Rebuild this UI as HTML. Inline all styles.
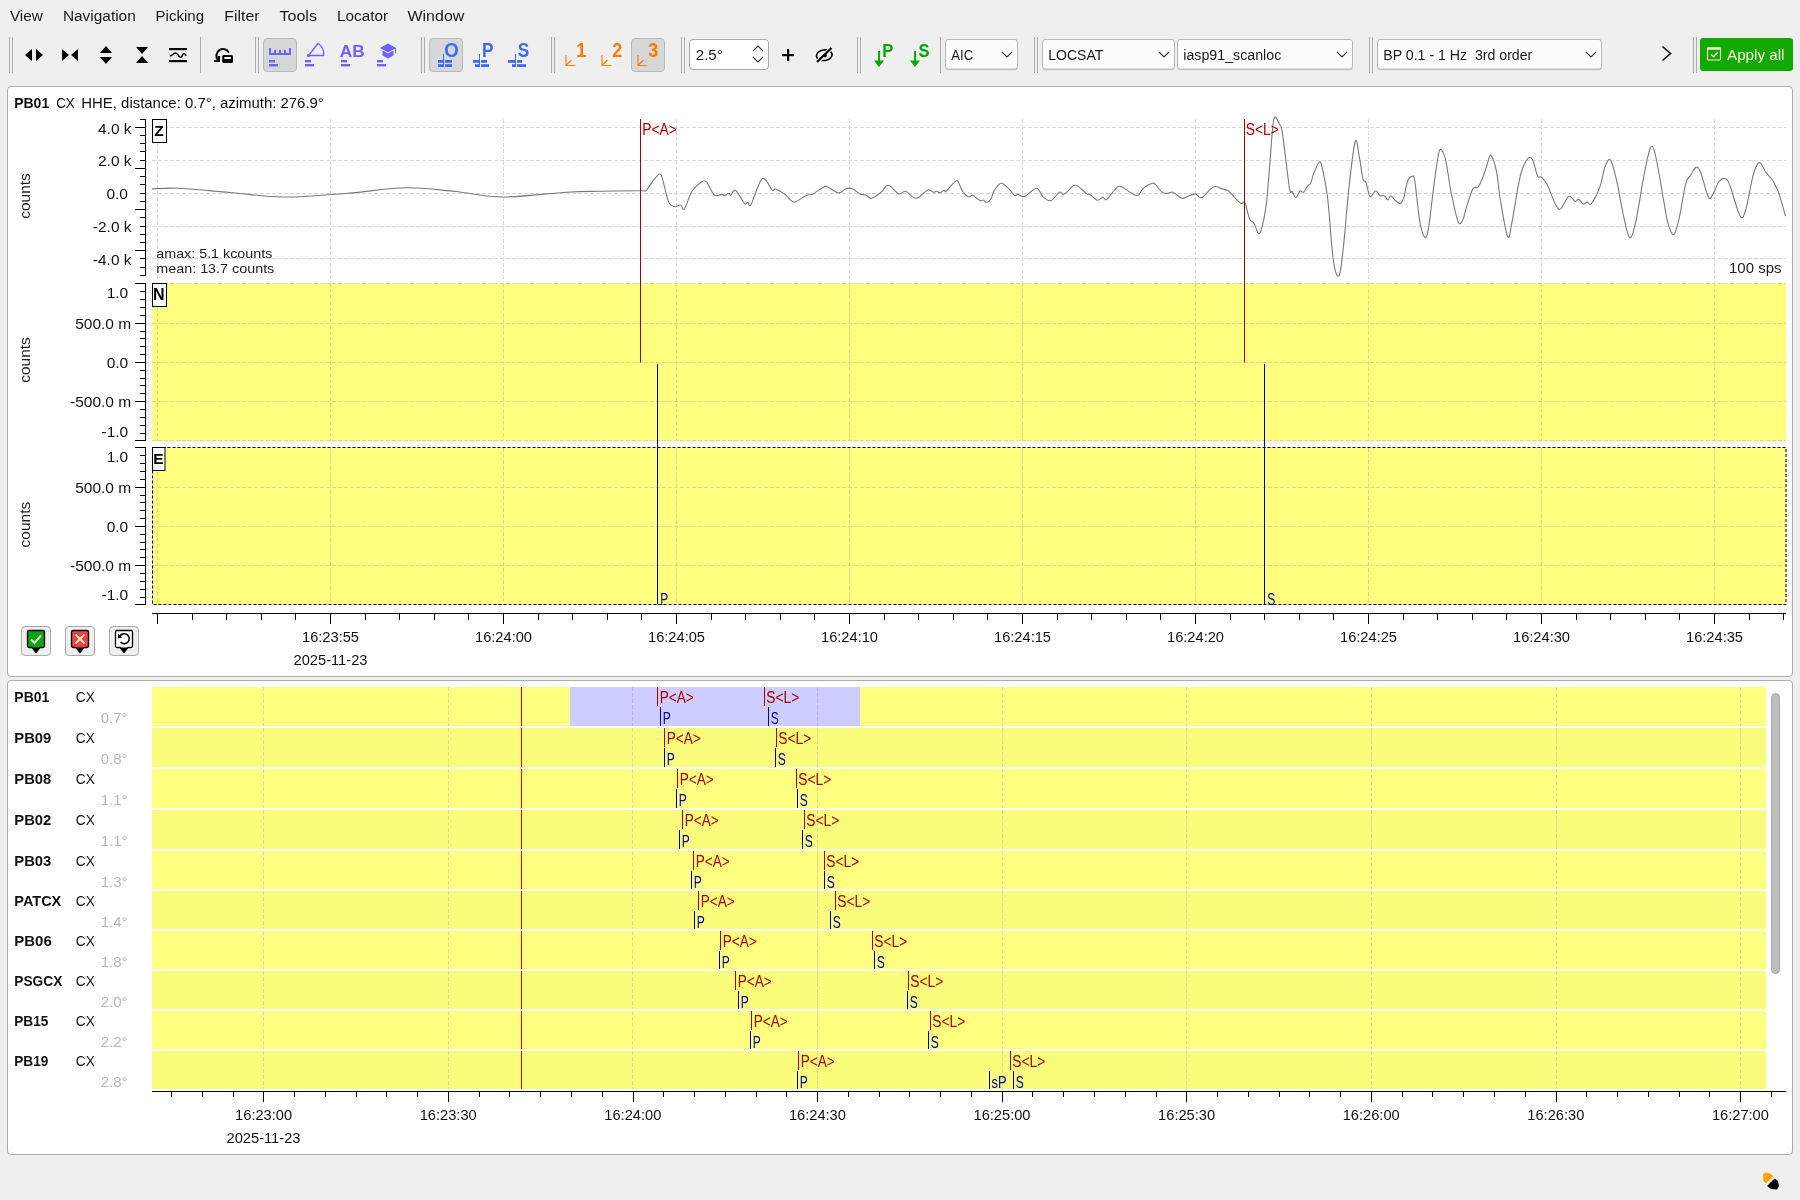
<!DOCTYPE html>
<html><head><meta charset="utf-8"><title>scolv</title>
<style>
html,body{margin:0;padding:0;background:#efefef;overflow:hidden;}
svg{display:block;font-family:"Liberation Sans", sans-serif;will-change:transform;}
</style></head><body>
<svg width="1800" height="1200" viewBox="0 0 1800 1200">
<rect x="0" y="0" width="1800" height="1200" fill="#efefef"/>
<text x="9.899999999999999" y="20.8" font-size="15.5" fill="#1a1a1a" textLength="32.9" lengthAdjust="spacingAndGlyphs">View</text>
<text x="62.900000000000006" y="20.8" font-size="15.5" fill="#1a1a1a" textLength="72.9" lengthAdjust="spacingAndGlyphs">Navigation</text>
<text x="155.5" y="20.8" font-size="15.5" fill="#1a1a1a" textLength="48.6" lengthAdjust="spacingAndGlyphs">Picking</text>
<text x="224.2" y="20.8" font-size="15.5" fill="#1a1a1a" textLength="35.4" lengthAdjust="spacingAndGlyphs">Filter</text>
<text x="279.4" y="20.8" font-size="15.5" fill="#1a1a1a" textLength="37.6" lengthAdjust="spacingAndGlyphs">Tools</text>
<text x="337.0" y="20.8" font-size="15.5" fill="#1a1a1a" textLength="51.1" lengthAdjust="spacingAndGlyphs">Locator</text>
<text x="407.5" y="20.8" font-size="15.5" fill="#1a1a1a" textLength="56.8" lengthAdjust="spacingAndGlyphs">Window</text>
<rect x="9" y="37" width="1" height="36" fill="#a9acb0"/>
<rect x="12" y="37" width="1" height="36" fill="#a9acb0"/>
<path d="M25,55 L32,49 L32,61 Z M36,49 L43,55 L36,61 Z" fill="#000"/>
<path d="M62,49 L69,55 L62,61 Z M78,49 L71,55 L78,61 Z" fill="#000"/>
<path d="M100,53 L106,46 L112,53 Z M100,57 L112,57 L106,64 Z" fill="#000"/>
<path d="M136,47 L148,47 L142,54 Z M142,56 L148,63 L136,63 Z" fill="#000"/>
<rect x="169" y="48" width="18" height="2.2" fill="#000"/>
<rect x="169" y="60" width="18" height="2.2" fill="#000"/>
<path d="M170,55.5 C171.5,57 173,53 175.5,53 C178,53 178.5,57.3 180.5,57.3 C182.5,57.3 182.5,53.5 184,53.5 C185,53.5 185.5,55 186.2,55.8" fill="none" stroke="#000" stroke-width="1.6"/>
<rect x="200" y="37" width="1" height="36" fill="#a9acb0"/>
<path d="M217.8,59.8 A6.6,6.6 0 1 1 228.8,52.6" fill="none" stroke="#000" stroke-width="2"/>
<path d="M215,61 L219,61 L219,57" fill="none" stroke="#000" stroke-width="2.1" stroke-linecap="square"/>
<rect x="222.2" y="55" width="10.8" height="8" fill="#000" rx="1.5"/>
<rect x="224.2" y="57" width="6.8" height="2" fill="#fff" rx="0.8"/>
<rect x="255" y="37" width="1" height="36" fill="#a9acb0"/>
<rect x="258" y="37" width="1" height="36" fill="#a9acb0"/>
<rect x="263.5" y="38.5" width="33" height="33" fill="#d6d7d7" stroke="#b9b9b9" stroke-width="1" rx="3.5"/>
<path d="M270,48 L270,54 L290,54 L290,48 M275,50 L275,54 M280,50 L280,54 M285,50 L285,54" fill="none" stroke="#6b63ff" stroke-width="2"/>
<rect x="269" y="60" width="6" height="2.4" fill="#6b63ff"/>
<rect x="269" y="64" width="9" height="2.4" fill="#6b63ff"/>
<path d="M308.5,55.5 L318,43.5 A12,12 0 0 1 323.5,55.5 Z" fill="none" stroke="#6b63ff" stroke-width="1.4"/>
<circle cx="308.5" cy="55.5" r="1.6" fill="#6b63ff"/>
<rect x="305" y="60" width="6" height="2.4" fill="#6b63ff"/>
<rect x="305" y="64" width="9" height="2.4" fill="#6b63ff"/>
<text x="339.8" y="57.2" font-size="17" fill="#6b63ff" font-weight="bold" textLength="25" lengthAdjust="spacingAndGlyphs">AB</text>
<rect x="341" y="60" width="6" height="2.4" fill="#6b63ff"/>
<rect x="341" y="64" width="9" height="2.4" fill="#6b63ff"/>
<path d="M380,48 L388,43.5 L396,48 L388,52.5 Z" fill="#6b63ff"/>
<path d="M382.5,50.5 L382.5,55.5 L388,58.5 L393.5,55.5 L393.5,50.5 L388,53.5 Z" fill="#6b63ff"/>
<path d="M395.5,48 L395.5,53.5" fill="none" stroke="#6b63ff" stroke-width="1"/>
<rect x="377" y="60" width="6" height="2.4" fill="#6b63ff"/>
<rect x="377" y="64" width="9" height="2.4" fill="#6b63ff"/>
<rect x="421" y="37" width="1" height="36" fill="#a9acb0"/>
<rect x="424" y="37" width="1" height="36" fill="#a9acb0"/>
<rect x="429.5" y="38.5" width="33" height="33" fill="#d6d7d7" stroke="#b9b9b9" stroke-width="1" rx="3.5"/>
<text x="444.3" y="57" font-size="19.5" fill="#3c68ff" font-weight="bold" textLength="14.5" lengthAdjust="spacingAndGlyphs">O</text>
<rect x="438" y="60" width="14" height="2.8" fill="#3c68ff"/>
<rect x="438" y="64.2" width="14" height="2.8" fill="#3c68ff"/>
<rect x="444" y="59.5" width="1.1" height="8" fill="#d6d7d7"/>
<rect x="443" y="54" width="1" height="13" fill="#3c68ff"/>
<text x="482" y="57" font-size="19.5" fill="#3c68ff" font-weight="bold" textLength="11.5" lengthAdjust="spacingAndGlyphs">P</text>
<rect x="473" y="60" width="14" height="2.8" fill="#3c68ff"/>
<rect x="475" y="64.2" width="14" height="2.8" fill="#3c68ff"/>
<rect x="480" y="59.5" width="1.1" height="8" fill="#efefef"/>
<rect x="479" y="54" width="1" height="13" fill="#3c68ff"/>
<text x="517.8" y="57" font-size="19.5" fill="#3c68ff" font-weight="bold" textLength="11.5" lengthAdjust="spacingAndGlyphs">S</text>
<rect x="508" y="60" width="14" height="2.8" fill="#3c68ff"/>
<rect x="512" y="64.2" width="14" height="2.8" fill="#3c68ff"/>
<rect x="516" y="59.5" width="1.1" height="8" fill="#efefef"/>
<rect x="515" y="54" width="1" height="13" fill="#3c68ff"/>
<rect x="551" y="37" width="1" height="36" fill="#a9acb0"/>
<rect x="554" y="37" width="1" height="36" fill="#a9acb0"/>
<text x="576" y="57" font-size="19.5" fill="#ff7a00" font-weight="bold" textLength="10.5" lengthAdjust="spacingAndGlyphs">1</text>
<path d="M566.0,55 L566.0,65.5 L575.5,65.5 M566.0,65.5 L571.5,60" fill="none" stroke="#ff7a00" stroke-width="1.1"/>
<text x="612.2" y="57" font-size="19.5" fill="#ff7a00" font-weight="bold" textLength="10" lengthAdjust="spacingAndGlyphs">2</text>
<path d="M602.0,55 L602.0,65.5 L611.5,65.5 M602.0,65.5 L607.5,60" fill="none" stroke="#ff7a00" stroke-width="1.1"/>
<rect x="631.5" y="38.5" width="33" height="33" fill="#d6d7d7" stroke="#b9b9b9" stroke-width="1" rx="3.5"/>
<text x="648.2" y="57" font-size="19.5" fill="#ff7a00" font-weight="bold" textLength="10" lengthAdjust="spacingAndGlyphs">3</text>
<path d="M638.0,55 L638.0,65.5 L647.5,65.5 M638.0,65.5 L643.5,60" fill="none" stroke="#ff7a00" stroke-width="1.1"/>
<rect x="681" y="37" width="1" height="36" fill="#a9acb0"/>
<rect x="684" y="37" width="1" height="36" fill="#a9acb0"/>
<rect x="689.5" y="39.5" width="79" height="30" fill="#fff" stroke="#a8a8a8" stroke-width="1" rx="3.5"/>
<text x="695.8" y="59.8" font-size="15.5" fill="#1a1a1a" textLength="27" lengthAdjust="spacingAndGlyphs">2.5°</text>
<path d="M753,51 L758,46 L763,51 M753,57 L758,62 L763,57" fill="none" stroke="#333" stroke-width="1.1"/>
<rect x="782" y="54" width="12" height="2.2" fill="#000"/>
<rect x="787" y="49" width="2.2" height="12" fill="#000"/>
<ellipse cx="824.3" cy="55.2" rx="7.9" ry="5.3" fill="none" stroke="#000" stroke-width="1.6" transform="rotate(-8 824.3 55.2)"/>
<path d="M816.6,62.4 L832.1,47.4" fill="none" stroke="#efefef" stroke-width="4.2"/>
<path d="M817,62 L831.5,48" fill="none" stroke="#000" stroke-width="2.1"/>
<circle cx="825.1" cy="55.6" r="1.8" fill="#000"/>
<rect x="857" y="37" width="1" height="36" fill="#a9acb0"/>
<rect x="860" y="37" width="1" height="36" fill="#a9acb0"/>
<rect x="878.1" y="51" width="2" height="10" fill="#00a900"/>
<path d="M874,60.5 L884,60.5 L879,67 Z" fill="#00a900"/>
<text x="882.2" y="56.8" font-size="18.5" fill="#00a900" font-weight="bold" textLength="11" lengthAdjust="spacingAndGlyphs">P</text>
<rect x="914.1" y="51" width="2" height="10" fill="#00a900"/>
<path d="M910,60.5 L920,60.5 L915,67 Z" fill="#00a900"/>
<text x="918.4" y="56.8" font-size="18.5" fill="#00a900" font-weight="bold" textLength="11" lengthAdjust="spacingAndGlyphs">S</text>
<rect x="940" y="37" width="1" height="36" fill="#a9acb0"/>
<rect x="945.5" y="40.5" width="72" height="30" fill="#d2d4d6" rx="2.5"/>
<rect x="945.5" y="39.5" width="72" height="29.5" fill="#fcfcfc" stroke="#b6b9bc" stroke-width="1" rx="2.5"/>
<text x="951.3" y="59.8" font-size="15.5" fill="#1a1a1a" textLength="22" lengthAdjust="spacingAndGlyphs">AIC</text>
<path d="M1002,52 L1007,57 L1012,52" fill="none" stroke="#333" stroke-width="1.1"/>
<rect x="1034" y="37" width="1" height="36" fill="#a9acb0"/>
<rect x="1037" y="37" width="1" height="36" fill="#a9acb0"/>
<rect x="1042.5" y="40.5" width="132" height="30" fill="#d2d4d6" rx="2.5"/>
<rect x="1042.5" y="39.5" width="132" height="29.5" fill="#fcfcfc" stroke="#b6b9bc" stroke-width="1" rx="2.5"/>
<text x="1048.3" y="59.8" font-size="15.5" fill="#1a1a1a" textLength="55" lengthAdjust="spacingAndGlyphs">LOCSAT</text>
<path d="M1159,52 L1164,57 L1169,52" fill="none" stroke="#333" stroke-width="1.1"/>
<rect x="1177.5" y="40.5" width="175" height="30" fill="#d2d4d6" rx="2.5"/>
<rect x="1177.5" y="39.5" width="175" height="29.5" fill="#fcfcfc" stroke="#b6b9bc" stroke-width="1" rx="2.5"/>
<text x="1183.3" y="59.8" font-size="15.5" fill="#1a1a1a" textLength="98" lengthAdjust="spacingAndGlyphs">iasp91_scanloc</text>
<path d="M1337,52 L1342,57 L1347,52" fill="none" stroke="#333" stroke-width="1.1"/>
<rect x="1369" y="37" width="1" height="36" fill="#a9acb0"/>
<rect x="1372" y="37" width="1" height="36" fill="#a9acb0"/>
<rect x="1377.5" y="40.5" width="224" height="30" fill="#d2d4d6" rx="2.5"/>
<rect x="1377.5" y="39.5" width="224" height="29.5" fill="#fcfcfc" stroke="#b6b9bc" stroke-width="1" rx="2.5"/>
<text x="1383.3" y="59.8" font-size="15.5" fill="#1a1a1a" textLength="149" lengthAdjust="spacingAndGlyphs">BP 0.1 - 1 Hz  3rd order</text>
<path d="M1586,52 L1591,57 L1596,52" fill="none" stroke="#333" stroke-width="1.1"/>
<path d="M1662.5,46.5 L1670.5,53.5 L1662.5,60.5" fill="none" stroke="#111" stroke-width="1.6"/>
<rect x="1693" y="37" width="1" height="36" fill="#a9acb0"/>
<rect x="1696" y="37" width="1" height="36" fill="#a9acb0"/>
<rect x="1700" y="38" width="93" height="33" fill="#12aa02" rx="3"/>
<rect x="1707.5" y="48" width="13" height="12" fill="none" stroke="#fdf3dc" stroke-width="1.1" rx="0.8"/>
<rect x="1707.5" y="47.5" width="13" height="2.2" fill="#fdf3dc"/>
<path d="M1711,54.5 L1713.5,56.8 L1717.5,52.5" fill="none" stroke="#fdf3dc" stroke-width="1.3"/>
<text x="1727" y="59.8" font-size="15.5" fill="#fdf3dc" textLength="57.5" lengthAdjust="spacingAndGlyphs">Apply all</text>
<rect x="7.5" y="86.5" width="1785" height="590" fill="#fff" stroke="#adadad" stroke-width="1" rx="3.5"/>
<text x="14.2" y="108.3" font-size="15.5" fill="#111" font-weight="bold" textLength="35" lengthAdjust="spacingAndGlyphs">PB01</text>
<text x="56.2" y="108.3" font-size="15.5" fill="#111" textLength="18.5" lengthAdjust="spacingAndGlyphs">CX</text>
<text x="81.3" y="108.3" font-size="15.5" fill="#111" textLength="242.5" lengthAdjust="spacingAndGlyphs">HHE, distance: 0.7°, azimuth: 276.9°</text>
<line x1="152" y1="127.5" x2="1786" y2="127.5" stroke="#d9d9d9" stroke-width="1" stroke-dasharray="4 2"/>
<line x1="152" y1="160.5" x2="1786" y2="160.5" stroke="#d9d9d9" stroke-width="1" stroke-dasharray="4 2"/>
<line x1="152" y1="226.5" x2="1786" y2="226.5" stroke="#d9d9d9" stroke-width="1" stroke-dasharray="4 2"/>
<line x1="152" y1="258.5" x2="1786" y2="258.5" stroke="#d9d9d9" stroke-width="1" stroke-dasharray="4 2"/>
<line x1="152" y1="193.5" x2="1786" y2="193.5" stroke="#d2d2ee" stroke-width="1" stroke-dasharray="4 2"/>
<line x1="157.5" y1="119" x2="157.5" y2="282" stroke="#d9d9d9" stroke-width="1" stroke-dasharray="4 2"/>
<line x1="330.5" y1="119" x2="330.5" y2="282" stroke="#d9d9d9" stroke-width="1" stroke-dasharray="4 2"/>
<line x1="503.5" y1="119" x2="503.5" y2="282" stroke="#d9d9d9" stroke-width="1" stroke-dasharray="4 2"/>
<line x1="676.5" y1="119" x2="676.5" y2="282" stroke="#d9d9d9" stroke-width="1" stroke-dasharray="4 2"/>
<line x1="849.5" y1="119" x2="849.5" y2="282" stroke="#d9d9d9" stroke-width="1" stroke-dasharray="4 2"/>
<line x1="1022.5" y1="119" x2="1022.5" y2="282" stroke="#d9d9d9" stroke-width="1" stroke-dasharray="4 2"/>
<line x1="1195.5" y1="119" x2="1195.5" y2="282" stroke="#d9d9d9" stroke-width="1" stroke-dasharray="4 2"/>
<line x1="1368.5" y1="119" x2="1368.5" y2="282" stroke="#d9d9d9" stroke-width="1" stroke-dasharray="4 2"/>
<line x1="1541.5" y1="119" x2="1541.5" y2="282" stroke="#d9d9d9" stroke-width="1" stroke-dasharray="4 2"/>
<line x1="1714.5" y1="119" x2="1714.5" y2="282" stroke="#d9d9d9" stroke-width="1" stroke-dasharray="4 2"/>
<rect x="145" y="119" width="1" height="157" fill="#000"/>
<rect x="140" y="119" width="5" height="1" fill="#000"/>
<rect x="135" y="127" width="10" height="1" fill="#000"/>
<rect x="140" y="135" width="5" height="1" fill="#000"/>
<rect x="140" y="143" width="5" height="1" fill="#000"/>
<rect x="140" y="151" width="5" height="1" fill="#000"/>
<rect x="140" y="160" width="5" height="1" fill="#000"/>
<rect x="135" y="168" width="10" height="1" fill="#000"/>
<rect x="140" y="176" width="5" height="1" fill="#000"/>
<rect x="140" y="184" width="5" height="1" fill="#000"/>
<rect x="140" y="193" width="5" height="1" fill="#000"/>
<rect x="140" y="201" width="5" height="1" fill="#000"/>
<rect x="135" y="209" width="10" height="1" fill="#000"/>
<rect x="140" y="217" width="5" height="1" fill="#000"/>
<rect x="140" y="226" width="5" height="1" fill="#000"/>
<rect x="140" y="234" width="5" height="1" fill="#000"/>
<rect x="140" y="242" width="5" height="1" fill="#000"/>
<rect x="135" y="250" width="10" height="1" fill="#000"/>
<rect x="140" y="258" width="5" height="1" fill="#000"/>
<rect x="140" y="267" width="5" height="1" fill="#000"/>
<rect x="140" y="275" width="5" height="1" fill="#000"/>
<text x="131.6" y="134.2" font-size="15.5" fill="#111" text-anchor="end">4.0 k</text>
<text x="131.6" y="165.7" font-size="15.5" fill="#111" text-anchor="end">2.0 k</text>
<text x="128" y="198.5" font-size="15.5" fill="#111" text-anchor="end">0.0</text>
<text x="131.6" y="231.5" font-size="15.5" fill="#111" text-anchor="end">-2.0 k</text>
<text x="131.6" y="264.5" font-size="15.5" fill="#111" text-anchor="end">-4.0 k</text>
<text x="0" y="0" font-size="15.5" fill="#222" text-anchor="middle" transform="translate(30.1,196) rotate(-90)">counts</text>
<path d="M152.0,188.9 C156.3,188.8 164.8,187.7 177.8,188.3 C190.8,188.9 212.5,191.1 230.0,192.5 C247.5,193.9 263.8,196.8 283.0,197.0 C302.2,197.2 324.6,195.0 345.0,193.5 C365.4,192.0 387.3,188.1 405.6,187.8 C423.9,187.5 438.8,190.0 455.0,191.5 C471.2,193.0 484.2,196.9 502.8,197.0 C521.4,197.1 550.5,193.1 566.7,192.2 C582.9,191.2 587.8,191.5 600.0,191.3 C612.2,191.1 632.6,190.9 640.0,190.8 C647.4,190.7 643.3,191.0 644.4,190.9 C645.5,190.8 645.2,191.7 646.7,190.0 C648.2,188.3 651.2,183.2 653.3,180.6 C655.4,178.0 657.6,174.7 659.1,174.2 C660.6,173.7 660.7,173.3 662.2,177.8 C663.7,182.3 666.3,196.3 668.3,201.1 C670.3,205.9 672.3,206.0 674.4,206.7 C676.5,207.3 678.9,204.6 680.6,205.0 C682.3,205.4 682.5,211.1 684.4,208.9 C686.2,206.7 688.9,196.1 691.7,191.7 C694.5,187.2 698.6,183.8 701.1,182.2 C703.6,180.6 704.5,180.1 706.7,182.2 C708.9,184.3 711.8,193.0 714.4,195.0 C717.0,197.0 720.5,194.3 722.2,194.4 C723.9,194.5 723.3,196.0 724.4,195.8 C725.5,195.6 727.9,193.4 728.9,193.3 C729.9,193.2 729.5,195.8 730.6,195.3 C731.7,194.8 733.3,188.9 735.6,190.2 C737.9,191.5 742.4,201.3 744.4,203.3 C746.4,205.3 746.7,202.0 747.8,202.2 C748.9,202.4 748.7,208.3 751.1,204.4 C753.5,200.5 758.7,181.1 762.2,178.7 C765.7,176.3 770.0,188.3 772.2,190.0 C774.4,191.7 773.6,188.4 775.6,189.1 C777.6,189.8 781.8,192.0 784.4,193.9 C787.0,195.8 789.2,199.3 791.1,200.6 C793.0,201.9 793.0,202.6 795.6,201.7 C798.2,200.8 803.9,196.5 806.7,195.3 C809.5,194.1 810.0,195.4 812.2,194.4 C814.4,193.4 817.8,190.7 820.0,189.4 C822.2,188.1 823.9,186.6 825.6,186.4 C827.3,186.2 828.1,187.3 830.0,188.3 C831.9,189.3 834.9,191.8 836.7,192.4 C838.6,193.1 839.6,192.8 841.1,192.2 C842.6,191.6 843.8,189.3 845.6,188.7 C847.5,188.1 849.8,187.8 852.2,188.7 C854.6,189.6 857.8,192.8 860.0,193.9 C862.2,195.0 863.6,194.3 865.6,195.0 C867.6,195.7 869.1,198.8 871.7,198.3 C874.3,197.8 878.3,194.4 881.1,192.2 C883.9,190.0 885.3,185.0 888.3,185.3 C891.3,185.6 896.0,192.9 898.9,193.9 C901.8,194.9 902.7,190.6 905.6,191.3 C908.5,192.0 912.4,198.5 916.1,198.3 C919.8,198.1 924.9,191.0 927.8,190.0 C930.7,189.0 931.8,192.0 933.3,192.2 C934.8,192.4 935.6,191.2 936.7,191.3 C937.8,191.4 938.7,193.0 940.0,192.8 C941.3,192.6 943.4,190.4 944.4,190.2 C945.4,189.9 944.2,192.8 946.1,191.3 C948.0,189.8 953.5,182.4 955.6,181.1 C957.7,179.8 957.8,181.7 958.9,183.3 C960.0,184.9 960.6,188.4 962.2,190.6 C963.8,192.8 966.5,195.9 968.3,196.7 C970.1,197.5 970.8,194.7 972.8,195.3 C974.8,196.0 978.2,199.8 980.0,200.6 C981.8,201.4 982.2,199.7 983.3,200.0 C984.4,200.3 985.4,202.4 986.7,202.2 C988.0,202.0 989.9,200.8 991.1,198.9 C992.3,197.1 992.2,193.7 993.9,191.1 C995.6,188.5 998.6,183.7 1001.1,183.3 C1003.6,182.9 1006.7,186.9 1008.9,188.9 C1011.1,190.9 1012.9,194.4 1014.4,195.3 C1015.9,196.2 1016.5,194.2 1017.8,194.4 C1019.1,194.6 1020.9,196.1 1022.2,196.4 C1023.5,196.7 1024.3,196.8 1025.6,196.1 C1026.9,195.4 1028.2,193.7 1030.0,192.4 C1031.8,191.1 1034.6,188.7 1036.1,188.3 C1037.6,187.9 1037.7,188.5 1038.9,190.0 C1040.1,191.5 1041.3,195.4 1043.3,197.2 C1045.3,199.0 1048.4,201.4 1051.1,200.6 C1053.8,199.8 1057.4,193.2 1059.4,192.2 C1061.4,191.2 1062.1,194.4 1063.3,194.4 C1064.5,194.4 1065.0,193.6 1066.7,192.2 C1068.4,190.8 1071.5,186.8 1073.3,185.8 C1075.1,184.8 1075.6,184.8 1077.8,186.1 C1080.0,187.4 1084.7,192.5 1086.7,193.9 C1088.7,195.3 1088.2,193.4 1090.0,194.4 C1091.8,195.4 1095.1,199.7 1097.2,200.2 C1099.3,200.7 1101.2,197.3 1102.8,197.2 C1104.4,197.1 1104.4,201.0 1106.7,199.4 C1109.0,197.8 1114.2,189.7 1116.7,187.6 C1119.2,185.5 1119.3,185.8 1121.7,186.7 C1124.1,187.6 1128.4,191.3 1131.1,192.8 C1133.8,194.3 1135.8,196.3 1137.8,195.6 C1139.8,194.8 1140.9,190.4 1143.3,188.3 C1145.7,186.2 1150.2,183.9 1152.2,183.3 C1154.2,182.7 1153.9,183.2 1155.6,184.7 C1157.3,186.2 1160.2,191.0 1162.2,192.4 C1164.2,193.8 1166.2,193.4 1167.8,193.3 C1169.4,193.2 1170.6,192.0 1171.7,192.0 C1172.8,192.0 1172.7,192.0 1174.4,193.1 C1176.2,194.2 1179.6,197.9 1182.2,198.3 C1184.8,198.7 1187.8,196.0 1190.0,195.3 C1192.2,194.6 1193.6,193.5 1195.6,193.9 C1197.5,194.3 1198.8,198.8 1201.7,197.6 C1204.7,196.4 1209.9,188.3 1213.3,186.9 C1216.7,185.5 1219.7,188.2 1222.2,188.9 C1224.7,189.6 1226.5,189.6 1228.5,191.0 C1230.5,192.4 1232.1,195.0 1234.2,197.1 C1236.3,199.2 1239.4,202.6 1241.2,203.5 C1243.0,204.4 1243.4,200.2 1244.8,202.8 C1246.2,205.4 1248.2,215.7 1249.7,219.1 C1251.2,222.5 1252.3,221.0 1254.0,223.3 C1255.7,225.7 1257.7,236.0 1259.7,233.2 C1261.7,230.4 1264.3,217.4 1266.0,206.3 C1267.7,195.2 1268.3,181.1 1269.6,166.7 C1270.9,152.2 1272.1,126.7 1273.8,119.6 C1275.5,112.5 1278.1,122.0 1279.5,124.2 C1280.9,126.4 1280.6,122.1 1282.3,132.7 C1284.0,143.3 1287.8,178.1 1289.4,187.9 C1291.1,197.7 1291.1,189.8 1292.2,191.4 C1293.3,193.1 1294.5,197.9 1295.8,197.8 C1297.1,197.7 1298.7,191.9 1300.0,191.0 C1301.3,190.1 1302.3,193.1 1303.6,192.2 C1304.9,191.3 1306.6,187.4 1307.8,185.8 C1309.0,184.2 1309.6,185.2 1310.7,182.9 C1311.8,180.7 1312.8,175.7 1314.2,172.3 C1315.6,168.9 1317.9,163.3 1319.2,162.4 C1320.5,161.5 1320.6,160.8 1322.0,166.7 C1323.4,172.6 1325.7,182.2 1327.6,197.8 C1329.5,213.4 1331.4,247.1 1333.3,260.1 C1335.2,273.1 1337.3,277.6 1339.0,275.7 C1340.7,273.8 1341.5,263.4 1343.2,248.8 C1344.9,234.2 1346.9,205.8 1348.9,187.9 C1350.9,170.0 1353.5,146.1 1355.3,141.2 C1357.1,136.2 1358.2,151.8 1359.5,158.2 C1360.8,164.6 1362.0,175.4 1363.1,179.4 C1364.2,183.4 1364.7,179.4 1365.9,182.2 C1367.1,185.0 1368.4,195.0 1370.1,196.4 C1371.8,197.8 1374.1,190.8 1375.8,190.7 C1377.5,190.6 1378.7,194.9 1380.1,195.7 C1381.5,196.5 1383.0,195.0 1384.3,195.7 C1385.6,196.4 1386.7,199.9 1387.8,199.9 C1388.9,199.9 1389.4,195.6 1390.7,195.7 C1392.0,195.8 1393.9,199.4 1395.6,200.7 C1397.2,202.0 1399.2,204.2 1400.6,203.5 C1402.0,202.8 1402.9,200.2 1404.1,196.4 C1405.3,192.6 1406.4,184.1 1407.7,180.8 C1409.0,177.5 1410.7,176.6 1411.9,176.6 C1413.1,176.6 1413.5,173.2 1414.8,180.8 C1416.1,188.4 1418.2,212.5 1419.9,221.9 C1421.6,231.3 1423.5,236.3 1424.9,237.5 C1426.3,238.7 1427.1,236.1 1428.4,229.0 C1429.7,221.9 1431.3,205.9 1432.7,195.0 C1434.1,184.1 1435.7,171.4 1436.9,163.8 C1438.1,156.2 1438.6,150.2 1440.0,149.4 C1441.4,148.6 1443.6,151.8 1445.4,158.9 C1447.2,166.0 1449.0,181.7 1451.1,192.2 C1453.2,202.7 1456.2,217.4 1458.2,221.9 C1460.2,226.4 1461.7,221.7 1463.1,219.1 C1464.5,216.5 1465.0,211.4 1466.7,206.3 C1468.4,201.2 1471.1,191.8 1473.0,188.6 C1474.9,185.4 1476.3,189.1 1478.0,187.2 C1479.7,185.3 1481.4,181.1 1482.9,177.3 C1484.4,173.5 1485.9,168.2 1487.2,164.5 C1488.5,160.8 1489.2,154.2 1490.7,155.3 C1492.2,156.4 1494.7,163.1 1496.4,170.9 C1498.1,178.7 1498.8,191.1 1500.7,202.1 C1502.6,213.1 1505.8,233.5 1507.7,236.8 C1509.6,240.1 1509.9,232.2 1512.0,221.9 C1514.1,211.6 1517.9,185.7 1520.5,175.2 C1523.1,164.7 1525.6,161.5 1527.6,158.9 C1529.6,156.3 1530.8,156.8 1532.5,159.6 C1534.2,162.4 1536.0,172.9 1537.5,175.9 C1539.0,178.9 1540.0,175.8 1541.7,177.3 C1543.4,178.8 1544.6,179.8 1547.4,185.1 C1550.2,190.4 1555.2,207.3 1558.7,209.2 C1562.2,211.1 1565.9,197.7 1568.6,196.4 C1571.3,195.1 1573.3,200.9 1575.0,201.4 C1576.7,201.9 1577.2,198.7 1578.6,199.2 C1580.0,199.7 1582.1,203.7 1583.5,204.2 C1584.9,204.7 1585.7,202.2 1587.0,202.1 C1588.3,202.0 1589.2,206.0 1591.3,203.5 C1593.4,201.0 1597.5,193.3 1599.8,187.2 C1602.1,181.1 1603.2,171.2 1605.0,166.7 C1606.8,162.2 1608.6,157.7 1610.6,160.3 C1612.6,162.9 1615.0,173.6 1617.0,182.2 C1619.0,190.8 1620.6,202.8 1622.7,212.0 C1624.8,221.2 1627.4,235.6 1629.5,237.5 C1631.6,239.4 1633.2,232.3 1635.4,223.3 C1637.6,214.3 1640.5,194.5 1642.5,183.7 C1644.5,172.8 1645.9,164.5 1647.5,158.2 C1649.1,151.9 1650.6,145.6 1652.1,146.1 C1653.6,146.6 1654.8,151.9 1656.7,161.0 C1658.6,170.1 1661.8,190.3 1663.7,200.7 C1665.6,211.1 1666.3,217.7 1668.0,223.3 C1669.7,229.0 1671.8,235.6 1673.7,234.6 C1675.6,233.6 1677.3,226.1 1679.3,217.6 C1681.3,209.1 1683.8,190.8 1685.7,183.7 C1687.6,176.6 1689.0,177.9 1690.7,175.2 C1692.4,172.5 1694.3,167.9 1696.0,167.4 C1697.7,166.9 1698.5,167.4 1700.6,172.3 C1702.7,177.2 1706.3,193.6 1708.4,197.1 C1710.5,200.6 1711.5,196.2 1713.3,193.6 C1715.1,191.0 1717.0,184.0 1719.0,181.5 C1721.0,179.0 1723.5,177.9 1725.4,178.7 C1727.3,179.5 1727.8,180.2 1730.3,186.5 C1732.8,192.8 1737.6,212.4 1740.2,216.2 C1742.8,220.0 1743.8,215.9 1745.9,209.2 C1748.0,202.5 1750.8,183.7 1753.0,175.9 C1755.2,168.1 1757.2,163.0 1759.3,162.4 C1761.4,161.8 1763.5,169.2 1765.7,172.3 C1768.0,175.4 1770.7,177.5 1772.8,180.8 C1774.9,184.1 1776.4,186.3 1778.5,192.2 C1780.6,198.1 1784.3,212.2 1785.5,216.2" fill="none" stroke="#7a7a7a" stroke-width="1.1" stroke-linejoin="round"/>
<rect x="152.5" y="119.5" width="14" height="23" fill="#fff" stroke="#000" stroke-width="1"/>
<text x="158.9" y="136.1" font-size="15.5" fill="#000" text-anchor="middle" font-weight="bold">Z</text>
<text x="156.3" y="257.8" font-size="13.5" fill="#222" textLength="116" lengthAdjust="spacingAndGlyphs">amax: 5.1 kcounts</text>
<text x="156.3" y="273.3" font-size="13.5" fill="#222" textLength="118" lengthAdjust="spacingAndGlyphs">mean: 13.7 counts</text>
<text x="1781.5" y="273" font-size="15" fill="#222" text-anchor="end">100 sps</text>
<rect x="152" y="283" width="1634" height="158" fill="#ffff80"/>
<line x1="152" y1="283.5" x2="1786" y2="283.5" stroke="#dcda7c" stroke-width="1" stroke-dasharray="4 2"/>
<line x1="152" y1="323.5" x2="1786" y2="323.5" stroke="#dcda7c" stroke-width="1" stroke-dasharray="4 2"/>
<line x1="152" y1="362.5" x2="1786" y2="362.5" stroke="#dcda7c" stroke-width="1" stroke-dasharray="4 2"/>
<line x1="152" y1="401.5" x2="1786" y2="401.5" stroke="#dcda7c" stroke-width="1" stroke-dasharray="4 2"/>
<line x1="152" y1="440.5" x2="1786" y2="440.5" stroke="#dcda7c" stroke-width="1" stroke-dasharray="4 2"/>
<line x1="157.5" y1="283" x2="157.5" y2="441" stroke="#dcda7c" stroke-width="1" stroke-dasharray="4 2"/>
<line x1="330.5" y1="283" x2="330.5" y2="441" stroke="#dcda7c" stroke-width="1" stroke-dasharray="4 2"/>
<line x1="503.5" y1="283" x2="503.5" y2="441" stroke="#dcda7c" stroke-width="1" stroke-dasharray="4 2"/>
<line x1="676.5" y1="283" x2="676.5" y2="441" stroke="#dcda7c" stroke-width="1" stroke-dasharray="4 2"/>
<line x1="849.5" y1="283" x2="849.5" y2="441" stroke="#dcda7c" stroke-width="1" stroke-dasharray="4 2"/>
<line x1="1022.5" y1="283" x2="1022.5" y2="441" stroke="#dcda7c" stroke-width="1" stroke-dasharray="4 2"/>
<line x1="1195.5" y1="283" x2="1195.5" y2="441" stroke="#dcda7c" stroke-width="1" stroke-dasharray="4 2"/>
<line x1="1368.5" y1="283" x2="1368.5" y2="441" stroke="#dcda7c" stroke-width="1" stroke-dasharray="4 2"/>
<line x1="1541.5" y1="283" x2="1541.5" y2="441" stroke="#dcda7c" stroke-width="1" stroke-dasharray="4 2"/>
<line x1="1714.5" y1="283" x2="1714.5" y2="441" stroke="#dcda7c" stroke-width="1" stroke-dasharray="4 2"/>
<rect x="145" y="283" width="1" height="158" fill="#000"/>
<rect x="135" y="283" width="10" height="1" fill="#000"/>
<rect x="140" y="291" width="5" height="1" fill="#000"/>
<rect x="140" y="299" width="5" height="1" fill="#000"/>
<rect x="140" y="307" width="5" height="1" fill="#000"/>
<rect x="140" y="315" width="5" height="1" fill="#000"/>
<rect x="135" y="323" width="10" height="1" fill="#000"/>
<rect x="140" y="331" width="5" height="1" fill="#000"/>
<rect x="140" y="338" width="5" height="1" fill="#000"/>
<rect x="140" y="346" width="5" height="1" fill="#000"/>
<rect x="140" y="354" width="5" height="1" fill="#000"/>
<rect x="135" y="362" width="10" height="1" fill="#000"/>
<rect x="140" y="370" width="5" height="1" fill="#000"/>
<rect x="140" y="378" width="5" height="1" fill="#000"/>
<rect x="140" y="385" width="5" height="1" fill="#000"/>
<rect x="140" y="393" width="5" height="1" fill="#000"/>
<rect x="135" y="401" width="10" height="1" fill="#000"/>
<rect x="140" y="409" width="5" height="1" fill="#000"/>
<rect x="140" y="417" width="5" height="1" fill="#000"/>
<rect x="140" y="425" width="5" height="1" fill="#000"/>
<rect x="140" y="433" width="5" height="1" fill="#000"/>
<rect x="135" y="440" width="10" height="1" fill="#000"/>
<text x="128.2" y="297.7" font-size="15.5" fill="#111" text-anchor="end">1.0</text>
<text x="131.2" y="328.5" font-size="15.5" fill="#111" text-anchor="end">500.0 m</text>
<text x="128.2" y="367.5" font-size="15.5" fill="#111" text-anchor="end">0.0</text>
<text x="131.2" y="406.5" font-size="15.5" fill="#111" text-anchor="end">-500.0 m</text>
<text x="128.2" y="436.8" font-size="15.5" fill="#111" text-anchor="end">-1.0</text>
<text x="0" y="0" font-size="15.5" fill="#222" text-anchor="middle" transform="translate(30.1,360) rotate(-90)">counts</text>
<rect x="152.5" y="283.5" width="14" height="23" fill="#fff" stroke="#000" stroke-width="1"/>
<text x="158.9" y="299.8" font-size="16" fill="#000" text-anchor="middle" font-weight="bold">N</text>
<rect x="152" y="447" width="1634" height="157.5" fill="#ffff80"/>
<line x1="152" y1="487.5" x2="1786" y2="487.5" stroke="#dcda7c" stroke-width="1" stroke-dasharray="4 2"/>
<line x1="152" y1="526.5" x2="1786" y2="526.5" stroke="#dcda7c" stroke-width="1" stroke-dasharray="4 2"/>
<line x1="152" y1="565.5" x2="1786" y2="565.5" stroke="#dcda7c" stroke-width="1" stroke-dasharray="4 2"/>
<line x1="157.5" y1="448" x2="157.5" y2="604" stroke="#dcda7c" stroke-width="1" stroke-dasharray="4 2"/>
<line x1="330.5" y1="448" x2="330.5" y2="604" stroke="#dcda7c" stroke-width="1" stroke-dasharray="4 2"/>
<line x1="503.5" y1="448" x2="503.5" y2="604" stroke="#dcda7c" stroke-width="1" stroke-dasharray="4 2"/>
<line x1="676.5" y1="448" x2="676.5" y2="604" stroke="#dcda7c" stroke-width="1" stroke-dasharray="4 2"/>
<line x1="849.5" y1="448" x2="849.5" y2="604" stroke="#dcda7c" stroke-width="1" stroke-dasharray="4 2"/>
<line x1="1022.5" y1="448" x2="1022.5" y2="604" stroke="#dcda7c" stroke-width="1" stroke-dasharray="4 2"/>
<line x1="1195.5" y1="448" x2="1195.5" y2="604" stroke="#dcda7c" stroke-width="1" stroke-dasharray="4 2"/>
<line x1="1368.5" y1="448" x2="1368.5" y2="604" stroke="#dcda7c" stroke-width="1" stroke-dasharray="4 2"/>
<line x1="1541.5" y1="448" x2="1541.5" y2="604" stroke="#dcda7c" stroke-width="1" stroke-dasharray="4 2"/>
<line x1="1714.5" y1="448" x2="1714.5" y2="604" stroke="#dcda7c" stroke-width="1" stroke-dasharray="4 2"/>
<rect x="152.5" y="447.5" width="1633.5" height="157" fill="none" stroke="#000" stroke-width="1" stroke-dasharray="3 2"/>
<rect x="145" y="447" width="1" height="158" fill="#000"/>
<rect x="135" y="447" width="10" height="1" fill="#000"/>
<rect x="140" y="455" width="5" height="1" fill="#000"/>
<rect x="140" y="463" width="5" height="1" fill="#000"/>
<rect x="140" y="471" width="5" height="1" fill="#000"/>
<rect x="140" y="479" width="5" height="1" fill="#000"/>
<rect x="135" y="487" width="10" height="1" fill="#000"/>
<rect x="140" y="495" width="5" height="1" fill="#000"/>
<rect x="140" y="502" width="5" height="1" fill="#000"/>
<rect x="140" y="510" width="5" height="1" fill="#000"/>
<rect x="140" y="518" width="5" height="1" fill="#000"/>
<rect x="135" y="526" width="10" height="1" fill="#000"/>
<rect x="140" y="534" width="5" height="1" fill="#000"/>
<rect x="140" y="542" width="5" height="1" fill="#000"/>
<rect x="140" y="549" width="5" height="1" fill="#000"/>
<rect x="140" y="557" width="5" height="1" fill="#000"/>
<rect x="135" y="565" width="10" height="1" fill="#000"/>
<rect x="140" y="573" width="5" height="1" fill="#000"/>
<rect x="140" y="581" width="5" height="1" fill="#000"/>
<rect x="140" y="589" width="5" height="1" fill="#000"/>
<rect x="140" y="597" width="5" height="1" fill="#000"/>
<rect x="135" y="604" width="10" height="1" fill="#000"/>
<text x="128.2" y="461.7" font-size="15.5" fill="#111" text-anchor="end">1.0</text>
<text x="131.2" y="492.5" font-size="15.5" fill="#111" text-anchor="end">500.0 m</text>
<text x="128.2" y="531.5" font-size="15.5" fill="#111" text-anchor="end">0.0</text>
<text x="131.2" y="570.5" font-size="15.5" fill="#111" text-anchor="end">-500.0 m</text>
<text x="128.2" y="600.2" font-size="15.5" fill="#111" text-anchor="end">-1.0</text>
<text x="0" y="0" font-size="15.5" fill="#222" text-anchor="middle" transform="translate(30.1,524.6) rotate(-90)">counts</text>
<rect x="152.5" y="447.5" width="12.5" height="23" fill="#fff" stroke="#000" stroke-width="1"/>
<text x="158.5" y="464.1" font-size="15.5" fill="#000" text-anchor="middle" font-weight="bold">E</text>
<rect x="640" y="119" width="1" height="243.5" fill="#a80000"/>
<text x="642.3" y="134.6" font-size="15.8" fill="#a80000" textLength="34.5" lengthAdjust="spacingAndGlyphs">P&lt;A&gt;</text>
<rect x="1244" y="119" width="1" height="243.5" fill="#a80000"/>
<text x="1245.8" y="134.8" font-size="15.8" fill="#a80000" textLength="33" lengthAdjust="spacingAndGlyphs">S&lt;L&gt;</text>
<rect x="657" y="364" width="1" height="240" fill="#0000a0"/>
<rect x="1264" y="364" width="1" height="240" fill="#0000a0"/>
<rect x="152" y="613" width="1634" height="1" fill="#000"/>
<rect x="157" y="614" width="1" height="10" fill="#000"/>
<rect x="192" y="614" width="1" height="6" fill="#000"/>
<rect x="226" y="614" width="1" height="6" fill="#000"/>
<rect x="261" y="614" width="1" height="6" fill="#000"/>
<rect x="295" y="614" width="1" height="6" fill="#000"/>
<rect x="330" y="614" width="1" height="10" fill="#000"/>
<rect x="365" y="614" width="1" height="6" fill="#000"/>
<rect x="399" y="614" width="1" height="6" fill="#000"/>
<rect x="434" y="614" width="1" height="6" fill="#000"/>
<rect x="468" y="614" width="1" height="6" fill="#000"/>
<rect x="503" y="614" width="1" height="10" fill="#000"/>
<rect x="538" y="614" width="1" height="6" fill="#000"/>
<rect x="572" y="614" width="1" height="6" fill="#000"/>
<rect x="607" y="614" width="1" height="6" fill="#000"/>
<rect x="641" y="614" width="1" height="6" fill="#000"/>
<rect x="676" y="614" width="1" height="10" fill="#000"/>
<rect x="711" y="614" width="1" height="6" fill="#000"/>
<rect x="745" y="614" width="1" height="6" fill="#000"/>
<rect x="780" y="614" width="1" height="6" fill="#000"/>
<rect x="814" y="614" width="1" height="6" fill="#000"/>
<rect x="849" y="614" width="1" height="10" fill="#000"/>
<rect x="884" y="614" width="1" height="6" fill="#000"/>
<rect x="918" y="614" width="1" height="6" fill="#000"/>
<rect x="953" y="614" width="1" height="6" fill="#000"/>
<rect x="987" y="614" width="1" height="6" fill="#000"/>
<rect x="1022" y="614" width="1" height="10" fill="#000"/>
<rect x="1057" y="614" width="1" height="6" fill="#000"/>
<rect x="1091" y="614" width="1" height="6" fill="#000"/>
<rect x="1126" y="614" width="1" height="6" fill="#000"/>
<rect x="1160" y="614" width="1" height="6" fill="#000"/>
<rect x="1195" y="614" width="1" height="10" fill="#000"/>
<rect x="1230" y="614" width="1" height="6" fill="#000"/>
<rect x="1264" y="614" width="1" height="6" fill="#000"/>
<rect x="1299" y="614" width="1" height="6" fill="#000"/>
<rect x="1333" y="614" width="1" height="6" fill="#000"/>
<rect x="1368" y="614" width="1" height="10" fill="#000"/>
<rect x="1403" y="614" width="1" height="6" fill="#000"/>
<rect x="1437" y="614" width="1" height="6" fill="#000"/>
<rect x="1472" y="614" width="1" height="6" fill="#000"/>
<rect x="1506" y="614" width="1" height="6" fill="#000"/>
<rect x="1541" y="614" width="1" height="10" fill="#000"/>
<rect x="1576" y="614" width="1" height="6" fill="#000"/>
<rect x="1610" y="614" width="1" height="6" fill="#000"/>
<rect x="1645" y="614" width="1" height="6" fill="#000"/>
<rect x="1679" y="614" width="1" height="6" fill="#000"/>
<rect x="1714" y="614" width="1" height="10" fill="#000"/>
<rect x="1749" y="614" width="1" height="6" fill="#000"/>
<rect x="1783" y="614" width="1" height="6" fill="#000"/>
<text x="330.5" y="641.9" font-size="15" fill="#111" text-anchor="middle" textLength="57" lengthAdjust="spacingAndGlyphs">16:23:55</text>
<text x="503.5" y="641.9" font-size="15" fill="#111" text-anchor="middle" textLength="57" lengthAdjust="spacingAndGlyphs">16:24:00</text>
<text x="676.5" y="641.9" font-size="15" fill="#111" text-anchor="middle" textLength="57" lengthAdjust="spacingAndGlyphs">16:24:05</text>
<text x="849.5" y="641.9" font-size="15" fill="#111" text-anchor="middle" textLength="57" lengthAdjust="spacingAndGlyphs">16:24:10</text>
<text x="1022.5" y="641.9" font-size="15" fill="#111" text-anchor="middle" textLength="57" lengthAdjust="spacingAndGlyphs">16:24:15</text>
<text x="1195.5" y="641.9" font-size="15" fill="#111" text-anchor="middle" textLength="57" lengthAdjust="spacingAndGlyphs">16:24:20</text>
<text x="1368.5" y="641.9" font-size="15" fill="#111" text-anchor="middle" textLength="57" lengthAdjust="spacingAndGlyphs">16:24:25</text>
<text x="1541.5" y="641.9" font-size="15" fill="#111" text-anchor="middle" textLength="57" lengthAdjust="spacingAndGlyphs">16:24:30</text>
<text x="1714.5" y="641.9" font-size="15" fill="#111" text-anchor="middle" textLength="57" lengthAdjust="spacingAndGlyphs">16:24:35</text>
<text x="330.5" y="665" font-size="15" fill="#111" text-anchor="middle" textLength="74" lengthAdjust="spacingAndGlyphs">2025-11-23</text>
<rect x="21.5" y="626.5" width="29" height="29" fill="#efefef" stroke="#a8a8a8" stroke-width="1" rx="3.5"/>
<path d="M27.5,632 Q27.5,630.5 29,630.5 L43,630.5 Q44.5,630.5 44.5,632 L44.5,646 Q44.5,647.5 43,647.5 L40,647.5 L36,652.5 L32,647.5 L29,647.5 Q27.5,647.5 27.5,646 Z" fill="#10a010" stroke="#000" stroke-width="1.3"/>
<path d="M32,647.5 L36,652.5 L40,647.5 Z" fill="#000"/>
<path d="M31,639.5 L34.5,643 L41,635.5" fill="none" stroke="#d8ffd0" stroke-width="2"/>
<rect x="65.5" y="626.5" width="29" height="29" fill="#efefef" stroke="#a8a8a8" stroke-width="1" rx="3.5"/>
<path d="M71.5,632 Q71.5,630.5 73,630.5 L87,630.5 Q88.5,630.5 88.5,632 L88.5,646 Q88.5,647.5 87,647.5 L84,647.5 L80,652.5 L76,647.5 L73,647.5 Q71.5,647.5 71.5,646 Z" fill="#e8453a" stroke="#000" stroke-width="1.3"/>
<path d="M76,647.5 L80,652.5 L84,647.5 Z" fill="#000"/>
<path d="M75.5,634.5 L84.5,643.5 M84.5,634.5 L75.5,643.5" fill="none" stroke="#ffe0dc" stroke-width="1.8"/>
<rect x="109.5" y="626.5" width="29" height="29" fill="#efefef" stroke="#a8a8a8" stroke-width="1" rx="3.5"/>
<path d="M115.5,632 Q115.5,630.5 117,630.5 L131,630.5 Q132.5,630.5 132.5,632 L132.5,646 Q132.5,647.5 131,647.5 L128,647.5 L124,652.5 L120,647.5 L117,647.5 Q115.5,647.5 115.5,646 Z" fill="#fff" stroke="#000" stroke-width="1.3"/>
<path d="M120,647.5 L124,652.5 L128,647.5 Z" fill="#000"/>
<path d="M119.8,636.5 A5,5 0 1 1 120.5,642" fill="none" stroke="#000" stroke-width="1.6"/>
<path d="M118,633.5 L122,637.5 L118,638.5 Z" fill="#000"/>
<text x="660.3" y="604.5" font-size="15.8" fill="#0000a0" textLength="8" lengthAdjust="spacingAndGlyphs">P</text>
<text x="1267.3" y="604.5" font-size="15.8" fill="#0000a0" textLength="8" lengthAdjust="spacingAndGlyphs">S</text>
<rect x="7.5" y="680.5" width="1785" height="474" fill="#fff" stroke="#adadad" stroke-width="1" rx="3.5"/>
<rect x="152" y="687" width="1614" height="39" fill="#ffff80"/>
<rect x="570" y="687" width="290" height="39" fill="#cdceff"/>
<line x1="263.5" y1="687" x2="263.5" y2="726" stroke="#dedc84" stroke-width="1" stroke-dasharray="4 2"/>
<line x1="448.5" y1="687" x2="448.5" y2="726" stroke="#dedc84" stroke-width="1" stroke-dasharray="4 2"/>
<line x1="632.5" y1="687" x2="632.5" y2="726" stroke="#b8b8d8" stroke-width="1" stroke-dasharray="4 2"/>
<line x1="817.5" y1="687" x2="817.5" y2="726" stroke="#b8b8d8" stroke-width="1" stroke-dasharray="4 2"/>
<line x1="1002.5" y1="687" x2="1002.5" y2="726" stroke="#dedc84" stroke-width="1" stroke-dasharray="4 2"/>
<line x1="1186.5" y1="687" x2="1186.5" y2="726" stroke="#dedc84" stroke-width="1" stroke-dasharray="4 2"/>
<line x1="1371.5" y1="687" x2="1371.5" y2="726" stroke="#dedc84" stroke-width="1" stroke-dasharray="4 2"/>
<line x1="1556.5" y1="687" x2="1556.5" y2="726" stroke="#dedc84" stroke-width="1" stroke-dasharray="4 2"/>
<line x1="1740.5" y1="687" x2="1740.5" y2="726" stroke="#dedc84" stroke-width="1" stroke-dasharray="4 2"/>
<rect x="521" y="687" width="1" height="39" fill="#ff0000"/>
<text x="14.3" y="702" font-size="15.5" fill="#111" font-weight="bold" textLength="35" lengthAdjust="spacingAndGlyphs">PB01</text>
<text x="75.8" y="702" font-size="15.5" fill="#111" textLength="19" lengthAdjust="spacingAndGlyphs">CX</text>
<text x="127.5" y="723" font-size="15" fill="#b9b9b9" text-anchor="end">0.7°</text>
<rect x="657" y="687" width="1" height="19" fill="#a80000"/>
<text x="659.8" y="703" font-size="15.8" fill="#a80000" textLength="34" lengthAdjust="spacingAndGlyphs">P&lt;A&gt;</text>
<rect x="660" y="707" width="1" height="19" fill="#0000a0"/>
<text x="662.8" y="724" font-size="15.8" fill="#0000a0" textLength="8" lengthAdjust="spacingAndGlyphs">P</text>
<rect x="764" y="687" width="1" height="19" fill="#a80000"/>
<text x="766.3" y="703" font-size="15.8" fill="#a80000" textLength="33" lengthAdjust="spacingAndGlyphs">S&lt;L&gt;</text>
<rect x="768" y="707" width="1" height="19" fill="#0000a0"/>
<text x="770.8" y="724" font-size="15.8" fill="#0000a0" textLength="8" lengthAdjust="spacingAndGlyphs">S</text>
<rect x="152" y="728" width="1614" height="39" fill="#fafc7c"/>
<line x1="263.5" y1="728" x2="263.5" y2="767" stroke="#dedc84" stroke-width="1" stroke-dasharray="4 2"/>
<line x1="448.5" y1="728" x2="448.5" y2="767" stroke="#dedc84" stroke-width="1" stroke-dasharray="4 2"/>
<line x1="632.5" y1="728" x2="632.5" y2="767" stroke="#dedc84" stroke-width="1" stroke-dasharray="4 2"/>
<line x1="817.5" y1="728" x2="817.5" y2="767" stroke="#dedc84" stroke-width="1" stroke-dasharray="4 2"/>
<line x1="1002.5" y1="728" x2="1002.5" y2="767" stroke="#dedc84" stroke-width="1" stroke-dasharray="4 2"/>
<line x1="1186.5" y1="728" x2="1186.5" y2="767" stroke="#dedc84" stroke-width="1" stroke-dasharray="4 2"/>
<line x1="1371.5" y1="728" x2="1371.5" y2="767" stroke="#dedc84" stroke-width="1" stroke-dasharray="4 2"/>
<line x1="1556.5" y1="728" x2="1556.5" y2="767" stroke="#dedc84" stroke-width="1" stroke-dasharray="4 2"/>
<line x1="1740.5" y1="728" x2="1740.5" y2="767" stroke="#dedc84" stroke-width="1" stroke-dasharray="4 2"/>
<rect x="521" y="728" width="1" height="39" fill="#ff0000"/>
<text x="14.3" y="743" font-size="15.5" fill="#111" font-weight="bold" textLength="37" lengthAdjust="spacingAndGlyphs">PB09</text>
<text x="75.8" y="743" font-size="15.5" fill="#111" textLength="19" lengthAdjust="spacingAndGlyphs">CX</text>
<text x="127.5" y="764" font-size="15" fill="#b9b9b9" text-anchor="end">0.8°</text>
<rect x="664" y="728" width="1" height="19" fill="#a80000"/>
<text x="666.8" y="744" font-size="15.8" fill="#a80000" textLength="34" lengthAdjust="spacingAndGlyphs">P&lt;A&gt;</text>
<rect x="664" y="748" width="1" height="19" fill="#0000a0"/>
<text x="666.8" y="765" font-size="15.8" fill="#0000a0" textLength="8" lengthAdjust="spacingAndGlyphs">P</text>
<rect x="776" y="728" width="1" height="19" fill="#a80000"/>
<text x="778.3" y="744" font-size="15.8" fill="#a80000" textLength="33" lengthAdjust="spacingAndGlyphs">S&lt;L&gt;</text>
<rect x="775" y="748" width="1" height="19" fill="#0000a0"/>
<text x="777.8" y="765" font-size="15.8" fill="#0000a0" textLength="8" lengthAdjust="spacingAndGlyphs">S</text>
<rect x="152" y="769" width="1614" height="39" fill="#ffff80"/>
<line x1="263.5" y1="769" x2="263.5" y2="808" stroke="#dedc84" stroke-width="1" stroke-dasharray="4 2"/>
<line x1="448.5" y1="769" x2="448.5" y2="808" stroke="#dedc84" stroke-width="1" stroke-dasharray="4 2"/>
<line x1="632.5" y1="769" x2="632.5" y2="808" stroke="#dedc84" stroke-width="1" stroke-dasharray="4 2"/>
<line x1="817.5" y1="769" x2="817.5" y2="808" stroke="#dedc84" stroke-width="1" stroke-dasharray="4 2"/>
<line x1="1002.5" y1="769" x2="1002.5" y2="808" stroke="#dedc84" stroke-width="1" stroke-dasharray="4 2"/>
<line x1="1186.5" y1="769" x2="1186.5" y2="808" stroke="#dedc84" stroke-width="1" stroke-dasharray="4 2"/>
<line x1="1371.5" y1="769" x2="1371.5" y2="808" stroke="#dedc84" stroke-width="1" stroke-dasharray="4 2"/>
<line x1="1556.5" y1="769" x2="1556.5" y2="808" stroke="#dedc84" stroke-width="1" stroke-dasharray="4 2"/>
<line x1="1740.5" y1="769" x2="1740.5" y2="808" stroke="#dedc84" stroke-width="1" stroke-dasharray="4 2"/>
<rect x="521" y="769" width="1" height="39" fill="#ff0000"/>
<text x="14.3" y="784" font-size="15.5" fill="#111" font-weight="bold" textLength="37" lengthAdjust="spacingAndGlyphs">PB08</text>
<text x="75.8" y="784" font-size="15.5" fill="#111" textLength="19" lengthAdjust="spacingAndGlyphs">CX</text>
<text x="127.5" y="805" font-size="15" fill="#b9b9b9" text-anchor="end">1.1°</text>
<rect x="677" y="769" width="1" height="19" fill="#a80000"/>
<text x="679.8" y="785" font-size="15.8" fill="#a80000" textLength="34" lengthAdjust="spacingAndGlyphs">P&lt;A&gt;</text>
<rect x="676" y="789" width="1" height="19" fill="#0000a0"/>
<text x="678.8" y="806" font-size="15.8" fill="#0000a0" textLength="8" lengthAdjust="spacingAndGlyphs">P</text>
<rect x="796" y="769" width="1" height="19" fill="#a80000"/>
<text x="798.3" y="785" font-size="15.8" fill="#a80000" textLength="33" lengthAdjust="spacingAndGlyphs">S&lt;L&gt;</text>
<rect x="797" y="789" width="1" height="19" fill="#0000a0"/>
<text x="799.8" y="806" font-size="15.8" fill="#0000a0" textLength="8" lengthAdjust="spacingAndGlyphs">S</text>
<rect x="152" y="810" width="1614" height="39" fill="#fafc7c"/>
<line x1="263.5" y1="810" x2="263.5" y2="849" stroke="#dedc84" stroke-width="1" stroke-dasharray="4 2"/>
<line x1="448.5" y1="810" x2="448.5" y2="849" stroke="#dedc84" stroke-width="1" stroke-dasharray="4 2"/>
<line x1="632.5" y1="810" x2="632.5" y2="849" stroke="#dedc84" stroke-width="1" stroke-dasharray="4 2"/>
<line x1="817.5" y1="810" x2="817.5" y2="849" stroke="#dedc84" stroke-width="1" stroke-dasharray="4 2"/>
<line x1="1002.5" y1="810" x2="1002.5" y2="849" stroke="#dedc84" stroke-width="1" stroke-dasharray="4 2"/>
<line x1="1186.5" y1="810" x2="1186.5" y2="849" stroke="#dedc84" stroke-width="1" stroke-dasharray="4 2"/>
<line x1="1371.5" y1="810" x2="1371.5" y2="849" stroke="#dedc84" stroke-width="1" stroke-dasharray="4 2"/>
<line x1="1556.5" y1="810" x2="1556.5" y2="849" stroke="#dedc84" stroke-width="1" stroke-dasharray="4 2"/>
<line x1="1740.5" y1="810" x2="1740.5" y2="849" stroke="#dedc84" stroke-width="1" stroke-dasharray="4 2"/>
<rect x="521" y="810" width="1" height="39" fill="#ff0000"/>
<text x="14.3" y="825" font-size="15.5" fill="#111" font-weight="bold" textLength="37" lengthAdjust="spacingAndGlyphs">PB02</text>
<text x="75.8" y="825" font-size="15.5" fill="#111" textLength="19" lengthAdjust="spacingAndGlyphs">CX</text>
<text x="127.5" y="846" font-size="15" fill="#b9b9b9" text-anchor="end">1.1°</text>
<rect x="682" y="810" width="1" height="19" fill="#a80000"/>
<text x="684.8" y="826" font-size="15.8" fill="#a80000" textLength="34" lengthAdjust="spacingAndGlyphs">P&lt;A&gt;</text>
<rect x="679" y="830" width="1" height="19" fill="#0000a0"/>
<text x="681.8" y="847" font-size="15.8" fill="#0000a0" textLength="8" lengthAdjust="spacingAndGlyphs">P</text>
<rect x="804" y="810" width="1" height="19" fill="#a80000"/>
<text x="806.3" y="826" font-size="15.8" fill="#a80000" textLength="33" lengthAdjust="spacingAndGlyphs">S&lt;L&gt;</text>
<rect x="802" y="830" width="1" height="19" fill="#0000a0"/>
<text x="804.8" y="847" font-size="15.8" fill="#0000a0" textLength="8" lengthAdjust="spacingAndGlyphs">S</text>
<rect x="152" y="851" width="1614" height="38" fill="#ffff80"/>
<line x1="263.5" y1="851" x2="263.5" y2="889" stroke="#dedc84" stroke-width="1" stroke-dasharray="4 2"/>
<line x1="448.5" y1="851" x2="448.5" y2="889" stroke="#dedc84" stroke-width="1" stroke-dasharray="4 2"/>
<line x1="632.5" y1="851" x2="632.5" y2="889" stroke="#dedc84" stroke-width="1" stroke-dasharray="4 2"/>
<line x1="817.5" y1="851" x2="817.5" y2="889" stroke="#dedc84" stroke-width="1" stroke-dasharray="4 2"/>
<line x1="1002.5" y1="851" x2="1002.5" y2="889" stroke="#dedc84" stroke-width="1" stroke-dasharray="4 2"/>
<line x1="1186.5" y1="851" x2="1186.5" y2="889" stroke="#dedc84" stroke-width="1" stroke-dasharray="4 2"/>
<line x1="1371.5" y1="851" x2="1371.5" y2="889" stroke="#dedc84" stroke-width="1" stroke-dasharray="4 2"/>
<line x1="1556.5" y1="851" x2="1556.5" y2="889" stroke="#dedc84" stroke-width="1" stroke-dasharray="4 2"/>
<line x1="1740.5" y1="851" x2="1740.5" y2="889" stroke="#dedc84" stroke-width="1" stroke-dasharray="4 2"/>
<rect x="521" y="851" width="1" height="38" fill="#ff0000"/>
<text x="14.3" y="866" font-size="15.5" fill="#111" font-weight="bold" textLength="37" lengthAdjust="spacingAndGlyphs">PB03</text>
<text x="75.8" y="866" font-size="15.5" fill="#111" textLength="19" lengthAdjust="spacingAndGlyphs">CX</text>
<text x="127.5" y="887" font-size="15" fill="#b9b9b9" text-anchor="end">1.3°</text>
<rect x="693" y="851" width="1" height="19" fill="#a80000"/>
<text x="695.8" y="867" font-size="15.8" fill="#a80000" textLength="34" lengthAdjust="spacingAndGlyphs">P&lt;A&gt;</text>
<rect x="691" y="871" width="1" height="18" fill="#0000a0"/>
<text x="693.8" y="888" font-size="15.8" fill="#0000a0" textLength="8" lengthAdjust="spacingAndGlyphs">P</text>
<rect x="824" y="851" width="1" height="19" fill="#a80000"/>
<text x="826.3" y="867" font-size="15.8" fill="#a80000" textLength="33" lengthAdjust="spacingAndGlyphs">S&lt;L&gt;</text>
<rect x="824" y="871" width="1" height="18" fill="#0000a0"/>
<text x="826.8" y="888" font-size="15.8" fill="#0000a0" textLength="8" lengthAdjust="spacingAndGlyphs">S</text>
<rect x="152" y="891" width="1614" height="38" fill="#fafc7c"/>
<line x1="263.5" y1="891" x2="263.5" y2="929" stroke="#dedc84" stroke-width="1" stroke-dasharray="4 2"/>
<line x1="448.5" y1="891" x2="448.5" y2="929" stroke="#dedc84" stroke-width="1" stroke-dasharray="4 2"/>
<line x1="632.5" y1="891" x2="632.5" y2="929" stroke="#dedc84" stroke-width="1" stroke-dasharray="4 2"/>
<line x1="817.5" y1="891" x2="817.5" y2="929" stroke="#dedc84" stroke-width="1" stroke-dasharray="4 2"/>
<line x1="1002.5" y1="891" x2="1002.5" y2="929" stroke="#dedc84" stroke-width="1" stroke-dasharray="4 2"/>
<line x1="1186.5" y1="891" x2="1186.5" y2="929" stroke="#dedc84" stroke-width="1" stroke-dasharray="4 2"/>
<line x1="1371.5" y1="891" x2="1371.5" y2="929" stroke="#dedc84" stroke-width="1" stroke-dasharray="4 2"/>
<line x1="1556.5" y1="891" x2="1556.5" y2="929" stroke="#dedc84" stroke-width="1" stroke-dasharray="4 2"/>
<line x1="1740.5" y1="891" x2="1740.5" y2="929" stroke="#dedc84" stroke-width="1" stroke-dasharray="4 2"/>
<rect x="521" y="891" width="1" height="38" fill="#ff0000"/>
<text x="14.3" y="906" font-size="15.5" fill="#111" font-weight="bold" textLength="47" lengthAdjust="spacingAndGlyphs">PATCX</text>
<text x="75.8" y="906" font-size="15.5" fill="#111" textLength="19" lengthAdjust="spacingAndGlyphs">CX</text>
<text x="127.5" y="927" font-size="15" fill="#b9b9b9" text-anchor="end">1.4°</text>
<rect x="698" y="891" width="1" height="19" fill="#a80000"/>
<text x="700.8" y="907" font-size="15.8" fill="#a80000" textLength="34" lengthAdjust="spacingAndGlyphs">P&lt;A&gt;</text>
<rect x="694" y="911" width="1" height="18" fill="#0000a0"/>
<text x="696.8" y="928" font-size="15.8" fill="#0000a0" textLength="8" lengthAdjust="spacingAndGlyphs">P</text>
<rect x="835" y="891" width="1" height="19" fill="#a80000"/>
<text x="837.3" y="907" font-size="15.8" fill="#a80000" textLength="33" lengthAdjust="spacingAndGlyphs">S&lt;L&gt;</text>
<rect x="830" y="911" width="1" height="18" fill="#0000a0"/>
<text x="832.8" y="928" font-size="15.8" fill="#0000a0" textLength="8" lengthAdjust="spacingAndGlyphs">S</text>
<rect x="152" y="931" width="1614" height="38" fill="#ffff80"/>
<line x1="263.5" y1="931" x2="263.5" y2="969" stroke="#dedc84" stroke-width="1" stroke-dasharray="4 2"/>
<line x1="448.5" y1="931" x2="448.5" y2="969" stroke="#dedc84" stroke-width="1" stroke-dasharray="4 2"/>
<line x1="632.5" y1="931" x2="632.5" y2="969" stroke="#dedc84" stroke-width="1" stroke-dasharray="4 2"/>
<line x1="817.5" y1="931" x2="817.5" y2="969" stroke="#dedc84" stroke-width="1" stroke-dasharray="4 2"/>
<line x1="1002.5" y1="931" x2="1002.5" y2="969" stroke="#dedc84" stroke-width="1" stroke-dasharray="4 2"/>
<line x1="1186.5" y1="931" x2="1186.5" y2="969" stroke="#dedc84" stroke-width="1" stroke-dasharray="4 2"/>
<line x1="1371.5" y1="931" x2="1371.5" y2="969" stroke="#dedc84" stroke-width="1" stroke-dasharray="4 2"/>
<line x1="1556.5" y1="931" x2="1556.5" y2="969" stroke="#dedc84" stroke-width="1" stroke-dasharray="4 2"/>
<line x1="1740.5" y1="931" x2="1740.5" y2="969" stroke="#dedc84" stroke-width="1" stroke-dasharray="4 2"/>
<rect x="521" y="931" width="1" height="38" fill="#ff0000"/>
<text x="14.3" y="946" font-size="15.5" fill="#111" font-weight="bold" textLength="37.5" lengthAdjust="spacingAndGlyphs">PB06</text>
<text x="75.8" y="946" font-size="15.5" fill="#111" textLength="19" lengthAdjust="spacingAndGlyphs">CX</text>
<text x="127.5" y="967" font-size="15" fill="#b9b9b9" text-anchor="end">1.8°</text>
<rect x="720" y="931" width="1" height="19" fill="#a80000"/>
<text x="722.8" y="947" font-size="15.8" fill="#a80000" textLength="34" lengthAdjust="spacingAndGlyphs">P&lt;A&gt;</text>
<rect x="719" y="951" width="1" height="18" fill="#0000a0"/>
<text x="721.8" y="968" font-size="15.8" fill="#0000a0" textLength="8" lengthAdjust="spacingAndGlyphs">P</text>
<rect x="872" y="931" width="1" height="19" fill="#a80000"/>
<text x="874.3" y="947" font-size="15.8" fill="#a80000" textLength="33" lengthAdjust="spacingAndGlyphs">S&lt;L&gt;</text>
<rect x="874" y="951" width="1" height="18" fill="#0000a0"/>
<text x="876.8" y="968" font-size="15.8" fill="#0000a0" textLength="8" lengthAdjust="spacingAndGlyphs">S</text>
<rect x="152" y="971" width="1614" height="38" fill="#fafc7c"/>
<line x1="263.5" y1="971" x2="263.5" y2="1009" stroke="#dedc84" stroke-width="1" stroke-dasharray="4 2"/>
<line x1="448.5" y1="971" x2="448.5" y2="1009" stroke="#dedc84" stroke-width="1" stroke-dasharray="4 2"/>
<line x1="632.5" y1="971" x2="632.5" y2="1009" stroke="#dedc84" stroke-width="1" stroke-dasharray="4 2"/>
<line x1="817.5" y1="971" x2="817.5" y2="1009" stroke="#dedc84" stroke-width="1" stroke-dasharray="4 2"/>
<line x1="1002.5" y1="971" x2="1002.5" y2="1009" stroke="#dedc84" stroke-width="1" stroke-dasharray="4 2"/>
<line x1="1186.5" y1="971" x2="1186.5" y2="1009" stroke="#dedc84" stroke-width="1" stroke-dasharray="4 2"/>
<line x1="1371.5" y1="971" x2="1371.5" y2="1009" stroke="#dedc84" stroke-width="1" stroke-dasharray="4 2"/>
<line x1="1556.5" y1="971" x2="1556.5" y2="1009" stroke="#dedc84" stroke-width="1" stroke-dasharray="4 2"/>
<line x1="1740.5" y1="971" x2="1740.5" y2="1009" stroke="#dedc84" stroke-width="1" stroke-dasharray="4 2"/>
<rect x="521" y="971" width="1" height="38" fill="#ff0000"/>
<text x="14.3" y="986" font-size="15.5" fill="#111" font-weight="bold" textLength="48" lengthAdjust="spacingAndGlyphs">PSGCX</text>
<text x="75.8" y="986" font-size="15.5" fill="#111" textLength="19" lengthAdjust="spacingAndGlyphs">CX</text>
<text x="127.5" y="1007" font-size="15" fill="#b9b9b9" text-anchor="end">2.0°</text>
<rect x="735" y="971" width="1" height="19" fill="#a80000"/>
<text x="737.8" y="987" font-size="15.8" fill="#a80000" textLength="34" lengthAdjust="spacingAndGlyphs">P&lt;A&gt;</text>
<rect x="738" y="991" width="1" height="18" fill="#0000a0"/>
<text x="740.8" y="1008" font-size="15.8" fill="#0000a0" textLength="8" lengthAdjust="spacingAndGlyphs">P</text>
<rect x="908" y="971" width="1" height="19" fill="#a80000"/>
<text x="910.3" y="987" font-size="15.8" fill="#a80000" textLength="33" lengthAdjust="spacingAndGlyphs">S&lt;L&gt;</text>
<rect x="907" y="991" width="1" height="18" fill="#0000a0"/>
<text x="909.8" y="1008" font-size="15.8" fill="#0000a0" textLength="8" lengthAdjust="spacingAndGlyphs">S</text>
<rect x="152" y="1011" width="1614" height="38" fill="#ffff80"/>
<line x1="263.5" y1="1011" x2="263.5" y2="1049" stroke="#dedc84" stroke-width="1" stroke-dasharray="4 2"/>
<line x1="448.5" y1="1011" x2="448.5" y2="1049" stroke="#dedc84" stroke-width="1" stroke-dasharray="4 2"/>
<line x1="632.5" y1="1011" x2="632.5" y2="1049" stroke="#dedc84" stroke-width="1" stroke-dasharray="4 2"/>
<line x1="817.5" y1="1011" x2="817.5" y2="1049" stroke="#dedc84" stroke-width="1" stroke-dasharray="4 2"/>
<line x1="1002.5" y1="1011" x2="1002.5" y2="1049" stroke="#dedc84" stroke-width="1" stroke-dasharray="4 2"/>
<line x1="1186.5" y1="1011" x2="1186.5" y2="1049" stroke="#dedc84" stroke-width="1" stroke-dasharray="4 2"/>
<line x1="1371.5" y1="1011" x2="1371.5" y2="1049" stroke="#dedc84" stroke-width="1" stroke-dasharray="4 2"/>
<line x1="1556.5" y1="1011" x2="1556.5" y2="1049" stroke="#dedc84" stroke-width="1" stroke-dasharray="4 2"/>
<line x1="1740.5" y1="1011" x2="1740.5" y2="1049" stroke="#dedc84" stroke-width="1" stroke-dasharray="4 2"/>
<rect x="521" y="1011" width="1" height="38" fill="#ff0000"/>
<text x="14.3" y="1026" font-size="15.5" fill="#111" font-weight="bold" textLength="34" lengthAdjust="spacingAndGlyphs">PB15</text>
<text x="75.8" y="1026" font-size="15.5" fill="#111" textLength="19" lengthAdjust="spacingAndGlyphs">CX</text>
<text x="127.5" y="1047" font-size="15" fill="#b9b9b9" text-anchor="end">2.2°</text>
<rect x="751" y="1011" width="1" height="19" fill="#a80000"/>
<text x="753.8" y="1027" font-size="15.8" fill="#a80000" textLength="34" lengthAdjust="spacingAndGlyphs">P&lt;A&gt;</text>
<rect x="750" y="1031" width="1" height="18" fill="#0000a0"/>
<text x="752.8" y="1048" font-size="15.8" fill="#0000a0" textLength="8" lengthAdjust="spacingAndGlyphs">P</text>
<rect x="930" y="1011" width="1" height="19" fill="#a80000"/>
<text x="932.3" y="1027" font-size="15.8" fill="#a80000" textLength="33" lengthAdjust="spacingAndGlyphs">S&lt;L&gt;</text>
<rect x="928" y="1031" width="1" height="18" fill="#0000a0"/>
<text x="930.8" y="1048" font-size="15.8" fill="#0000a0" textLength="8" lengthAdjust="spacingAndGlyphs">S</text>
<rect x="152" y="1051" width="1614" height="38" fill="#fafc7c"/>
<line x1="263.5" y1="1051" x2="263.5" y2="1089" stroke="#dedc84" stroke-width="1" stroke-dasharray="4 2"/>
<line x1="448.5" y1="1051" x2="448.5" y2="1089" stroke="#dedc84" stroke-width="1" stroke-dasharray="4 2"/>
<line x1="632.5" y1="1051" x2="632.5" y2="1089" stroke="#dedc84" stroke-width="1" stroke-dasharray="4 2"/>
<line x1="817.5" y1="1051" x2="817.5" y2="1089" stroke="#dedc84" stroke-width="1" stroke-dasharray="4 2"/>
<line x1="1002.5" y1="1051" x2="1002.5" y2="1089" stroke="#dedc84" stroke-width="1" stroke-dasharray="4 2"/>
<line x1="1186.5" y1="1051" x2="1186.5" y2="1089" stroke="#dedc84" stroke-width="1" stroke-dasharray="4 2"/>
<line x1="1371.5" y1="1051" x2="1371.5" y2="1089" stroke="#dedc84" stroke-width="1" stroke-dasharray="4 2"/>
<line x1="1556.5" y1="1051" x2="1556.5" y2="1089" stroke="#dedc84" stroke-width="1" stroke-dasharray="4 2"/>
<line x1="1740.5" y1="1051" x2="1740.5" y2="1089" stroke="#dedc84" stroke-width="1" stroke-dasharray="4 2"/>
<rect x="521" y="1051" width="1" height="38" fill="#ff0000"/>
<text x="14.3" y="1066" font-size="15.5" fill="#111" font-weight="bold" textLength="34" lengthAdjust="spacingAndGlyphs">PB19</text>
<text x="75.8" y="1066" font-size="15.5" fill="#111" textLength="19" lengthAdjust="spacingAndGlyphs">CX</text>
<text x="127.5" y="1087" font-size="15" fill="#b9b9b9" text-anchor="end">2.8°</text>
<rect x="798" y="1051" width="1" height="19" fill="#a80000"/>
<text x="800.8" y="1067" font-size="15.8" fill="#a80000" textLength="34" lengthAdjust="spacingAndGlyphs">P&lt;A&gt;</text>
<rect x="797" y="1071" width="1" height="18" fill="#0000a0"/>
<text x="799.8" y="1088" font-size="15.8" fill="#0000a0" textLength="8" lengthAdjust="spacingAndGlyphs">P</text>
<rect x="1010" y="1051" width="1" height="19" fill="#a80000"/>
<text x="1012.3" y="1067" font-size="15.8" fill="#a80000" textLength="33" lengthAdjust="spacingAndGlyphs">S&lt;L&gt;</text>
<rect x="1013" y="1071" width="1" height="18" fill="#0000a0"/>
<text x="1015.8" y="1088" font-size="15.8" fill="#0000a0" textLength="8" lengthAdjust="spacingAndGlyphs">S</text>
<rect x="989" y="1071" width="1" height="18" fill="#0000a0"/>
<text x="991.5" y="1088" font-size="15.8" fill="#0000a0" textLength="15" lengthAdjust="spacingAndGlyphs">sP</text>
<rect x="1771.5" y="693.5" width="8" height="280" fill="#bdbdbd" stroke="#a8a8a8" stroke-width="1" rx="4"/>
<rect x="152" y="1091" width="1634" height="1" fill="#000"/>
<rect x="171" y="1092" width="1" height="5" fill="#000"/>
<rect x="202" y="1092" width="1" height="5" fill="#000"/>
<rect x="233" y="1092" width="1" height="5" fill="#000"/>
<rect x="263" y="1092" width="1" height="10" fill="#000"/>
<rect x="294" y="1092" width="1" height="5" fill="#000"/>
<rect x="325" y="1092" width="1" height="5" fill="#000"/>
<rect x="356" y="1092" width="1" height="5" fill="#000"/>
<rect x="386" y="1092" width="1" height="5" fill="#000"/>
<rect x="417" y="1092" width="1" height="5" fill="#000"/>
<rect x="448" y="1092" width="1" height="10" fill="#000"/>
<rect x="479" y="1092" width="1" height="5" fill="#000"/>
<rect x="509" y="1092" width="1" height="5" fill="#000"/>
<rect x="540" y="1092" width="1" height="5" fill="#000"/>
<rect x="571" y="1092" width="1" height="5" fill="#000"/>
<rect x="602" y="1092" width="1" height="5" fill="#000"/>
<rect x="633" y="1092" width="1" height="10" fill="#000"/>
<rect x="663" y="1092" width="1" height="5" fill="#000"/>
<rect x="694" y="1092" width="1" height="5" fill="#000"/>
<rect x="725" y="1092" width="1" height="5" fill="#000"/>
<rect x="756" y="1092" width="1" height="5" fill="#000"/>
<rect x="786" y="1092" width="1" height="5" fill="#000"/>
<rect x="817" y="1092" width="1" height="10" fill="#000"/>
<rect x="848" y="1092" width="1" height="5" fill="#000"/>
<rect x="879" y="1092" width="1" height="5" fill="#000"/>
<rect x="909" y="1092" width="1" height="5" fill="#000"/>
<rect x="940" y="1092" width="1" height="5" fill="#000"/>
<rect x="971" y="1092" width="1" height="5" fill="#000"/>
<rect x="1002" y="1092" width="1" height="10" fill="#000"/>
<rect x="1032" y="1092" width="1" height="5" fill="#000"/>
<rect x="1063" y="1092" width="1" height="5" fill="#000"/>
<rect x="1094" y="1092" width="1" height="5" fill="#000"/>
<rect x="1125" y="1092" width="1" height="5" fill="#000"/>
<rect x="1156" y="1092" width="1" height="5" fill="#000"/>
<rect x="1186" y="1092" width="1" height="10" fill="#000"/>
<rect x="1217" y="1092" width="1" height="5" fill="#000"/>
<rect x="1248" y="1092" width="1" height="5" fill="#000"/>
<rect x="1279" y="1092" width="1" height="5" fill="#000"/>
<rect x="1309" y="1092" width="1" height="5" fill="#000"/>
<rect x="1340" y="1092" width="1" height="5" fill="#000"/>
<rect x="1371" y="1092" width="1" height="10" fill="#000"/>
<rect x="1402" y="1092" width="1" height="5" fill="#000"/>
<rect x="1432" y="1092" width="1" height="5" fill="#000"/>
<rect x="1463" y="1092" width="1" height="5" fill="#000"/>
<rect x="1494" y="1092" width="1" height="5" fill="#000"/>
<rect x="1525" y="1092" width="1" height="5" fill="#000"/>
<rect x="1556" y="1092" width="1" height="10" fill="#000"/>
<rect x="1586" y="1092" width="1" height="5" fill="#000"/>
<rect x="1617" y="1092" width="1" height="5" fill="#000"/>
<rect x="1648" y="1092" width="1" height="5" fill="#000"/>
<rect x="1679" y="1092" width="1" height="5" fill="#000"/>
<rect x="1709" y="1092" width="1" height="5" fill="#000"/>
<rect x="1740" y="1092" width="1" height="10" fill="#000"/>
<rect x="1771" y="1092" width="1" height="5" fill="#000"/>
<text x="263.6" y="1119.8" font-size="15" fill="#111" text-anchor="middle" textLength="57" lengthAdjust="spacingAndGlyphs">16:23:00</text>
<text x="448.2" y="1119.8" font-size="15" fill="#111" text-anchor="middle" textLength="57" lengthAdjust="spacingAndGlyphs">16:23:30</text>
<text x="632.8" y="1119.8" font-size="15" fill="#111" text-anchor="middle" textLength="57" lengthAdjust="spacingAndGlyphs">16:24:00</text>
<text x="817.3999999999999" y="1119.8" font-size="15" fill="#111" text-anchor="middle" textLength="57" lengthAdjust="spacingAndGlyphs">16:24:30</text>
<text x="1002.0" y="1119.8" font-size="15" fill="#111" text-anchor="middle" textLength="57" lengthAdjust="spacingAndGlyphs">16:25:00</text>
<text x="1186.6" y="1119.8" font-size="15" fill="#111" text-anchor="middle" textLength="57" lengthAdjust="spacingAndGlyphs">16:25:30</text>
<text x="1371.1999999999998" y="1119.8" font-size="15" fill="#111" text-anchor="middle" textLength="57" lengthAdjust="spacingAndGlyphs">16:26:00</text>
<text x="1555.8" y="1119.8" font-size="15" fill="#111" text-anchor="middle" textLength="57" lengthAdjust="spacingAndGlyphs">16:26:30</text>
<text x="1740.3999999999999" y="1119.8" font-size="15" fill="#111" text-anchor="middle" textLength="57" lengthAdjust="spacingAndGlyphs">16:27:00</text>
<text x="263.5" y="1142.9" font-size="15" fill="#111" text-anchor="middle" textLength="74" lengthAdjust="spacingAndGlyphs">2025-11-23</text>
<path d="M1763,1174 L1766,1172.5 L1770,1173.5 L1773.5,1176 L1766,1183.5 L1763.5,1181 Z" fill="#ffa500"/>
<path d="M1767,1186 L1774.5,1178.5 L1778,1181 L1779,1186 L1777,1189.5 L1771,1189 Z" fill="#000"/>
</svg>
</body></html>
